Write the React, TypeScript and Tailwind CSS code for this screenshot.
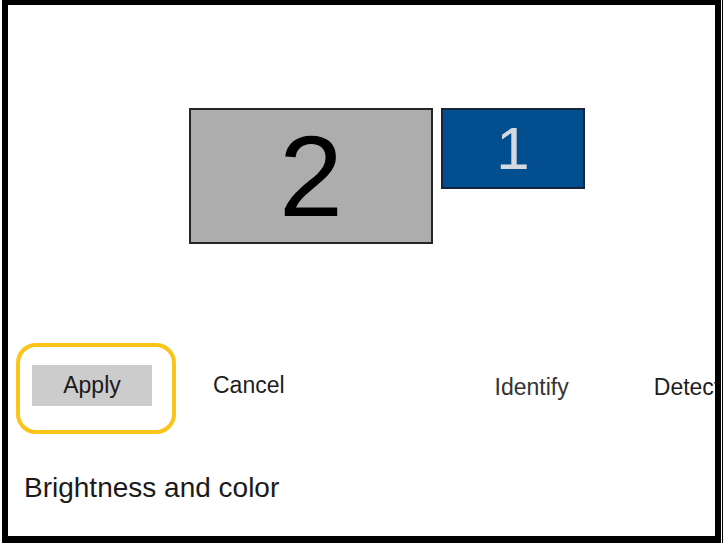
import React from 'react';

export default function App() {
  return (
    <div className="w-[728px] h-[546px] bg-white pl-[2px] font-['Liberation_Sans',Arial,sans-serif]">
      {/* Window frame */}
      <div className="w-[719px] h-[543px] border-black border-l-[6px] border-t-[5px] border-r-[6px] border-b-[7px] overflow-hidden bg-white shadow-[1px_0_0_#fff,2px_0_0_#000]">
        {/* Monitor arrangement */}
        <div className="flex items-start gap-[8px] pl-[181px] pt-[103px]">
          <div className="w-[244px] h-[136px] shrink-0 bg-[#adadad] border-2 border-[#262626] flex items-center justify-center">
            <span className="text-[115px] leading-none text-black">2</span>
          </div>
          <div className="w-[144px] h-[81px] shrink-0 bg-[#034e8f] border-2 border-[#15263a] flex items-center justify-center">
            <span className="text-[60px] leading-none text-[#d6dae0]">1</span>
          </div>
        </div>

        {/* Action row */}
        <div className="flex items-start mt-[99px] pl-[8px] whitespace-nowrap">
          <div className="w-[160px] h-[91px] shrink-0 border-4 border-[#fcc419] rounded-[20px] pl-[12px] pt-[18px]">
            <button className="w-[120px] h-[41px] bg-[#cccccc] flex items-center justify-center text-[23px] leading-none text-[#1a1a1a]">
              Apply
            </button>
          </div>
          <span className="ml-[37px] mt-[31px] shrink-0 text-[23px] leading-none text-[#1e1e1e]">Cancel</span>
          <span className="ml-[210px] mt-[33px] shrink-0 text-[23px] leading-none text-[#333333]">Identify</span>
          <span className="ml-[85px] mt-[33px] shrink-0 text-[23px] leading-none text-[#1e1e1e]">Detect</span>
        </div>

        <div className="mt-[40px] pl-[16px] text-[28px] leading-none text-[#1a1a1a]">Brightness and color</div>
      </div>
    </div>
  );
}
